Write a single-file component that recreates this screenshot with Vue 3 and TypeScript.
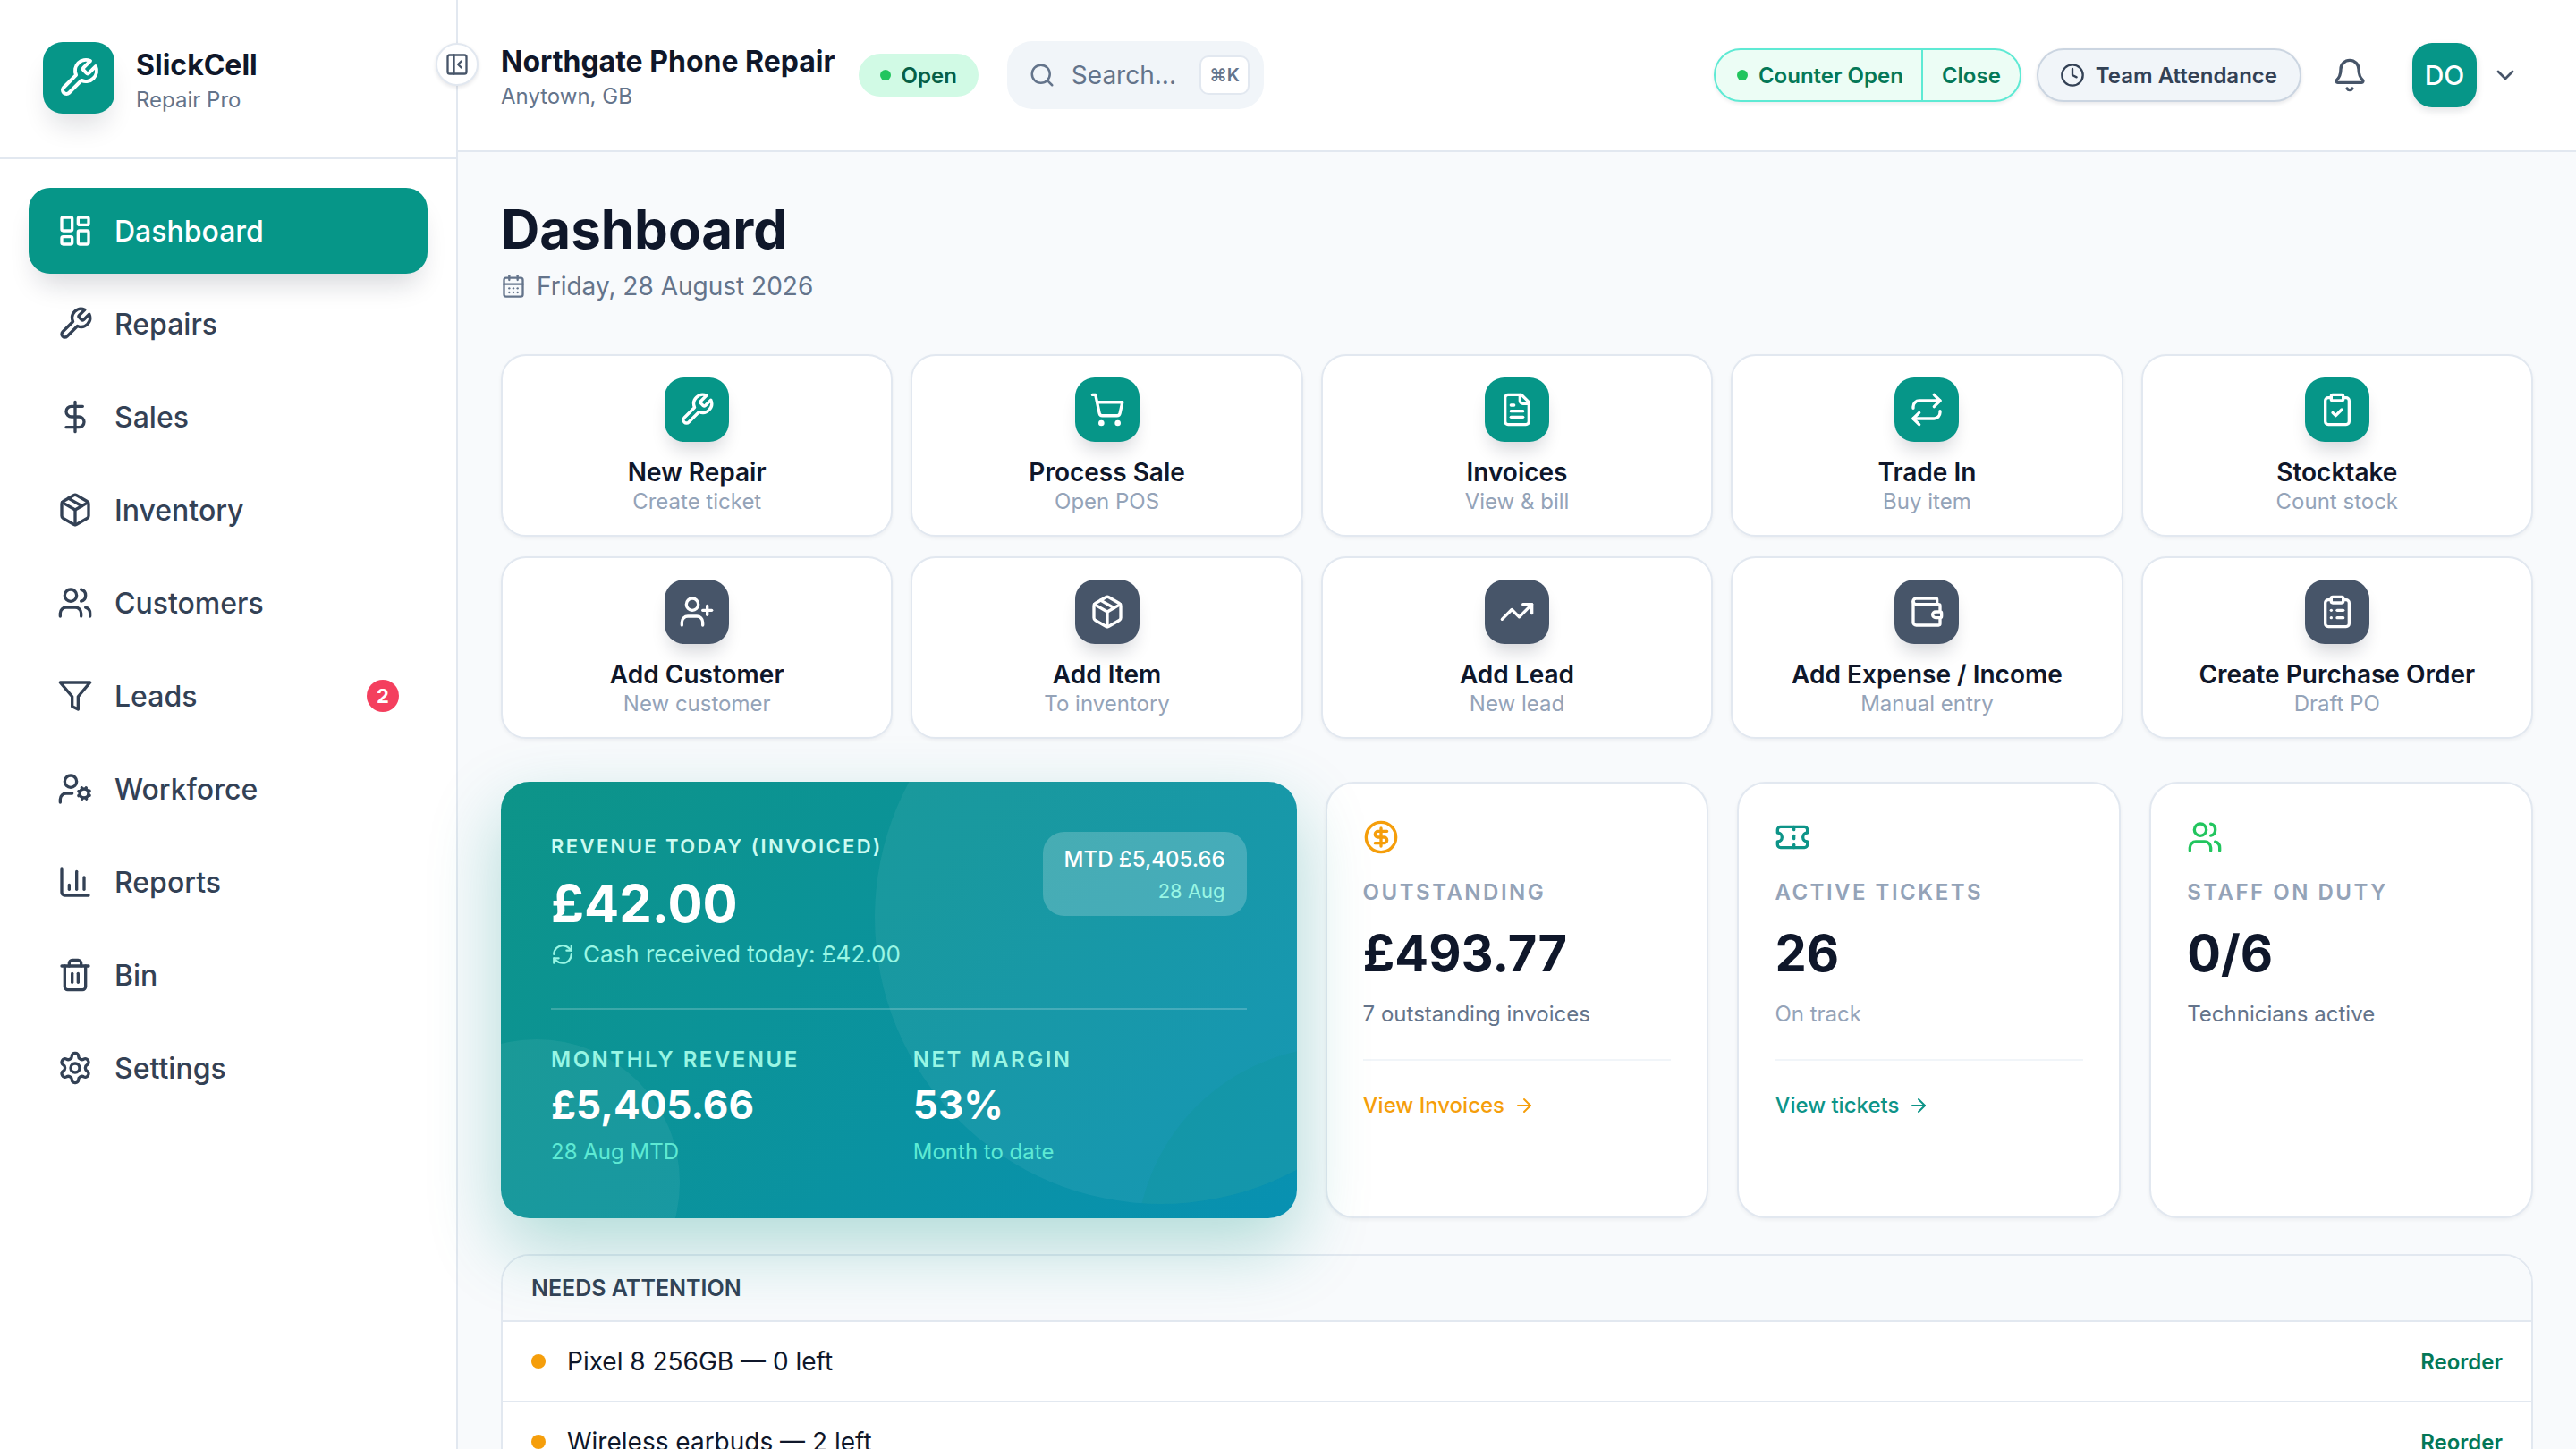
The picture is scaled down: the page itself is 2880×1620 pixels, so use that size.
<script setup lang="ts">
const icons: Record<string, string> = {
  wrench: '<path d="M14.7 6.3a1 1 0 0 0 0 1.4l1.6 1.6a1 1 0 0 0 1.4 0l3.77-3.77a6 6 0 0 1-7.94 7.94l-6.91 6.91a2.12 2.12 0 0 1-3-3l6.91-6.91a6 6 0 0 1 7.94-7.94l-3.76 3.76z"/>',
  dashboard: '<rect x="3" y="3" width="7" height="9" rx="1"/><rect x="14" y="3" width="7" height="5" rx="1"/><rect x="14" y="12" width="7" height="9" rx="1"/><rect x="3" y="16" width="7" height="5" rx="1"/>',
  dollar: '<line x1="12" y1="2" x2="12" y2="22"/><path d="M17 5H9.5a3.5 3.5 0 0 0 0 7h5a3.5 3.5 0 0 1 0 7H6"/>',
  box: '<path d="M11 21.73a2 2 0 0 0 2 0l7-4A2 2 0 0 0 21 16V8a2 2 0 0 0-1-1.73l-7-4a2 2 0 0 0-2 0l-7 4A2 2 0 0 0 3 8v8a2 2 0 0 0 1 1.73z"/><path d="M12 22V12"/><path d="m3.3 7 8.7 5 8.7-5"/><path d="m7.5 4.27 9 5.15"/>',
  users: '<path d="M16 21v-2a4 4 0 0 0-4-4H6a4 4 0 0 0-4 4v2"/><circle cx="9" cy="7" r="4"/><path d="M22 21v-2a4 4 0 0 0-3-3.87"/><path d="M16 3.13a4 4 0 0 1 0 7.75"/>',
  funnel: '<polygon points="22 3 2 3 10 12.46 10 19 14 21 14 12.46 22 3"/>',
  userCog: '<circle cx="18" cy="15" r="3"/><circle cx="9" cy="7" r="4"/><path d="M10 15H6a4 4 0 0 0-4 4v2"/><path d="m21.7 16.4-.9-.3"/><path d="m15.2 13.9-.9-.3"/><path d="m16.6 18.7.3-.9"/><path d="m19.1 12.2.3-.9"/><path d="m19.6 18.7-.4-1"/><path d="m16.8 12.3-.4-1"/><path d="m14.3 16.6 1-.4"/><path d="m20.7 13.8 1-.4"/>',
  chart: '<path d="M3 3v16a2 2 0 0 0 2 2h16"/><path d="M18 17V9"/><path d="M13 17V5"/><path d="M8 17v-3"/>',
  trash: '<path d="M3 6h18"/><path d="M19 6v14c0 1-1 2-2 2H7c-1 0-2-1-2-2V6"/><path d="M8 6V4c0-1 1-2 2-2h4c1 0 2 1 2 2v2"/><line x1="10" y1="11" x2="10" y2="17"/><line x1="14" y1="11" x2="14" y2="17"/>',
  settings: '<path d="M12.22 2h-.44a2 2 0 0 0-2 2v.18a2 2 0 0 1-1 1.73l-.43.25a2 2 0 0 1-2 0l-.15-.08a2 2 0 0 0-2.73.73l-.22.38a2 2 0 0 0 .73 2.73l.15.1a2 2 0 0 1 1 1.72v.51a2 2 0 0 1-1 1.74l-.15.09a2 2 0 0 0-.73 2.73l.22.38a2 2 0 0 0 2.73.73l.15-.08a2 2 0 0 1 2 0l.43.25a2 2 0 0 1 1 1.73V20a2 2 0 0 0 2 2h.44a2 2 0 0 0 2-2v-.18a2 2 0 0 1 1-1.73l.43-.25a2 2 0 0 1 2 0l.15.08a2 2 0 0 0 2.73-.73l.22-.39a2 2 0 0 0-.73-2.73l-.15-.08a2 2 0 0 1-1-1.74v-.5a2 2 0 0 1 1-1.74l.15-.09a2 2 0 0 0 .73-2.73l-.22-.38a2 2 0 0 0-2.73-.73l-.15.08a2 2 0 0 1-2 0l-.43-.25a2 2 0 0 1-1-1.73V4a2 2 0 0 0-2-2z"/><circle cx="12" cy="12" r="3"/>',
  panel: '<rect x="3" y="3" width="18" height="18" rx="2"/><path d="M9 3v18"/><path d="m16 15-3-3 3-3"/>',
  calendar: '<path d="M8 2v4"/><path d="M16 2v4"/><rect x="3" y="4" width="18" height="18" rx="2"/><path d="M3 10h18"/><path d="M8 14h.01"/><path d="M12 14h.01"/><path d="M16 14h.01"/><path d="M8 18h.01"/><path d="M12 18h.01"/><path d="M16 18h.01"/>',
  search: '<path d="m21 21-4.34-4.34"/><circle cx="11" cy="11" r="8"/>',
  clock: '<circle cx="12" cy="12" r="10"/><polyline points="12 6 12 12 16 14"/>',
  bell: '<path d="M10.268 21a2 2 0 0 0 3.464 0"/><path d="M3.262 15.326A1 1 0 0 0 4 17h16a1 1 0 0 0 .74-1.673C19.41 13.956 18 12.499 18 8A6 6 0 0 0 6 8c0 4.499-1.411 5.956-2.738 7.326"/>',
  chevron: '<path d="m6 9 6 6 6-6"/>',
  cart: '<circle cx="8" cy="21" r="1"/><circle cx="19" cy="21" r="1"/><path d="M2.05 2.05h2l2.66 12.42a2 2 0 0 0 2 1.58h9.78a2 2 0 0 0 1.95-1.57l1.65-7.43H5.12"/>',
  file: '<path d="M15 2H6a2 2 0 0 0-2 2v16a2 2 0 0 0 2 2h12a2 2 0 0 0 2-2V7Z"/><path d="M14 2v4a2 2 0 0 0 2 2h4"/><path d="M10 9H8"/><path d="M16 13H8"/><path d="M16 17H8"/>',
  repeat: '<path d="m17 2 4 4-4 4"/><path d="M3 11v-1a4 4 0 0 1 4-4h14"/><path d="m7 22-4-4 4-4"/><path d="M21 13v1a4 4 0 0 1-4 4H3"/>',
  clipCheck: '<rect x="8" y="2" width="8" height="4" rx="1"/><path d="M16 4h2a2 2 0 0 1 2 2v14a2 2 0 0 1-2 2H6a2 2 0 0 1-2-2V6a2 2 0 0 1 2-2h2"/><path d="m9 14 2 2 4-4"/>',
  userPlus: '<path d="M16 21v-2a4 4 0 0 0-4-4H6a4 4 0 0 0-4 4v2"/><circle cx="9" cy="7" r="4"/><line x1="19" y1="8" x2="19" y2="14"/><line x1="22" y1="11" x2="16" y2="11"/>',
  trending: '<path d="M16 7h6v6"/><path d="m22 7-8.5 8.5-5-5L2 17"/>',
  wallet: '<path d="M19 7V4a1 1 0 0 0-1-1H5a2 2 0 0 0 0 4h15a1 1 0 0 1 1 1v4h-3a2 2 0 0 0 0 4h3a1 1 0 0 0 1-1v-2a1 1 0 0 0-1-1"/><path d="M3 5v14a2 2 0 0 0 2 2h15a1 1 0 0 0 1-1v-4"/>',
  clipList: '<rect x="8" y="2" width="8" height="4" rx="1"/><path d="M16 4h2a2 2 0 0 1 2 2v14a2 2 0 0 1-2 2H6a2 2 0 0 1-2-2V6a2 2 0 0 1 2-2h2"/><path d="M12 11h4"/><path d="M12 16h4"/><path d="M8 11h.01"/><path d="M8 16h.01"/>',
  coin: '<circle cx="12" cy="12" r="10"/><path d="M16 8h-6a2 2 0 1 0 0 4h4a2 2 0 1 1 0 4H8"/><path d="M12 18V6"/>',
  ticket: '<path d="M2 9a3 3 0 0 1 0 6v2a2 2 0 0 0 2 2h16a2 2 0 0 0 2-2v-2a3 3 0 0 1 0-6V7a2 2 0 0 0-2-2H4a2 2 0 0 0-2 2Z"/><path d="M13 5v2"/><path d="M13 17v2"/><path d="M13 11v2"/>',
  refresh: '<path d="M3 12a9 9 0 0 1 9-9 9.75 9.75 0 0 1 6.74 2.74L21 8"/><path d="M21 3v5h-5"/><path d="M21 12a9 9 0 0 1-9 9 9.75 9.75 0 0 1-6.74-2.74L3 16"/><path d="M8 16H3v5"/>',
  arrow: '<path d="M5 12h14"/><path d="m12 5 7 7-7 7"/>',
}

const navItems = [
  { label: 'Dashboard', icon: 'dashboard', active: true },
  { label: 'Repairs', icon: 'wrench' },
  { label: 'Sales', icon: 'dollar' },
  { label: 'Inventory', icon: 'box' },
  { label: 'Customers', icon: 'users' },
  { label: 'Leads', icon: 'funnel', badge: 2 },
  { label: 'Workforce', icon: 'userCog' },
  { label: 'Reports', icon: 'chart' },
  { label: 'Bin', icon: 'trash' },
  { label: 'Settings', icon: 'settings' },
]

const actions = [
  { title: 'New Repair', sub: 'Create ticket', icon: 'wrench', tone: 'teal' },
  { title: 'Process Sale', sub: 'Open POS', icon: 'cart', tone: 'teal' },
  { title: 'Invoices', sub: 'View & bill', icon: 'file', tone: 'teal' },
  { title: 'Trade In', sub: 'Buy item', icon: 'repeat', tone: 'teal' },
  { title: 'Stocktake', sub: 'Count stock', icon: 'clipCheck', tone: 'teal' },
  { title: 'Add Customer', sub: 'New customer', icon: 'userPlus', tone: 'slate' },
  { title: 'Add Item', sub: 'To inventory', icon: 'box', tone: 'slate' },
  { title: 'Add Lead', sub: 'New lead', icon: 'trending', tone: 'slate' },
  { title: 'Add Expense / Income', sub: 'Manual entry', icon: 'wallet', tone: 'slate' },
  { title: 'Create Purchase Order', sub: 'Draft PO', icon: 'clipList', tone: 'slate' },
]

const stats = [
  { label: 'Outstanding', value: '£493.77', sub: '7 outstanding invoices', icon: 'coin', tone: 'amber', link: 'View Invoices' },
  { label: 'Active Tickets', value: '26', sub: 'On track', icon: 'ticket', tone: 'teal', link: 'View tickets', muted: true },
  { label: 'Staff on Duty', value: '0/6', sub: 'Technicians active', icon: 'users', tone: 'green' },
]

const alerts = ['Pixel 8 256GB — 0 left', 'Wireless earbuds — 2 left']
</script>

<template>
  <div class="shell">
    <aside class="sidebar">
      <div class="brand">
        <div class="brand-mark">
          <svg class="ico ico-48" viewBox="0 0 24 24" v-html="icons.wrench" />
        </div>
        <div class="brand-text">
          <div class="brand-name">SlickCell</div>
          <div class="brand-plan">Repair Pro</div>
        </div>
      </div>
      <nav class="nav">
        <a
          v-for="item in navItems"
          :key="item.label"
          class="nav-item"
          :class="{ active: item.active }"
        >
          <svg class="ico ico-40" viewBox="0 0 24 24" v-html="icons[item.icon]" />
          <span class="nav-label">{{ item.label }}</span>
          <span v-if="item.badge" class="nav-badge">{{ item.badge }}</span>
        </a>
      </nav>
    </aside>

    <button class="collapse">
      <svg class="ico ico-28" viewBox="0 0 24 24" v-html="icons.panel" />
    </button>

    <div class="main">
      <header class="topbar">
        <div class="shop">
          <div class="shop-name">Northgate Phone Repair</div>
          <div class="shop-place">Anytown, GB</div>
        </div>
        <span class="open-pill"><i class="dot" />Open</span>
        <div class="search">
          <svg class="ico ico-30" viewBox="0 0 24 24" v-html="icons.search" />
          <span class="search-text">Search...</span>
          <kbd class="kbd">⌘K</kbd>
        </div>
        <div class="top-right">
          <div class="counter">
            <span class="counter-state"><i class="dot" />Counter Open</span>
            <span class="counter-close">Close</span>
          </div>
          <div class="attendance">
            <svg class="ico ico-28" viewBox="0 0 24 24" v-html="icons.clock" />
            Team Attendance
          </div>
          <svg class="ico ico-40 bell" viewBox="0 0 24 24" v-html="icons.bell" />
          <div class="avatar">DO</div>
          <svg class="ico ico-32 caret" viewBox="0 0 24 24" v-html="icons.chevron" />
        </div>
      </header>

      <main class="content">
        <h1 class="page-title">Dashboard</h1>
        <div class="page-date">
          <svg class="ico ico-28" viewBox="0 0 24 24" v-html="icons.calendar" />
          Friday, 28 August 2026
        </div>

        <section class="actions">
          <div v-for="action in actions" :key="action.title" class="action">
            <div class="action-icon" :class="action.tone">
              <svg class="ico ico-40" viewBox="0 0 24 24" v-html="icons[action.icon]" />
            </div>
            <div class="action-title">{{ action.title }}</div>
            <div class="action-sub">{{ action.sub }}</div>
          </div>
        </section>

        <section class="stats">
          <div class="hero">
            <i class="blob blob-a"><i class="blob-c" /></i>
            <i class="blob blob-b" />
            <div class="hero-top">
              <div>
                <div class="hero-label">REVENUE TODAY (INVOICED)</div>
                <div class="hero-value">£42.00</div>
                <div class="hero-cash">
                  <svg class="ico ico-26" viewBox="0 0 24 24" v-html="icons.refresh" />
                  Cash received today: £42.00
                </div>
              </div>
              <div class="mtd">
                <div class="mtd-value">MTD £5,405.66</div>
                <div class="mtd-date">28 Aug</div>
              </div>
            </div>
            <div class="hero-bottom">
              <div>
                <div class="hero-sublabel">MONTHLY REVENUE</div>
                <div class="hero-subvalue">£5,405.66</div>
                <div class="hero-note">28 Aug MTD</div>
              </div>
              <div>
                <div class="hero-sublabel">NET MARGIN</div>
                <div class="hero-subvalue">53%</div>
                <div class="hero-note">Month to date</div>
              </div>
            </div>
          </div>

          <div v-for="stat in stats" :key="stat.label" class="stat">
            <svg class="ico ico-40" :class="stat.tone" viewBox="0 0 24 24" v-html="icons[stat.icon]" />
            <div class="stat-label">{{ stat.label }}</div>
            <div class="stat-value">{{ stat.value }}</div>
            <div class="stat-sub" :class="{ muted: stat.muted }">{{ stat.sub }}</div>
            <div v-if="stat.link" class="stat-foot" :class="stat.tone">
              {{ stat.link }}
              <svg class="ico ico-24" viewBox="0 0 24 24" v-html="icons.arrow" />
            </div>
          </div>
        </section>

        <section class="panel">
          <div class="panel-head">NEEDS ATTENTION</div>
          <div v-for="alert in alerts" :key="alert" class="panel-row">
            <i class="amber-dot" />
            <span class="panel-text">{{ alert }}</span>
            <a class="reorder">Reorder</a>
          </div>
        </section>
      </main>
    </div>
  </div>
</template>

<style>
html,
body {
  margin: 0;
  background: #f8fafc;
}
</style>

<style scoped>
.shell {
  position: relative;
  display: flex;
  width: 2880px;
  height: 1620px;
  overflow: hidden;
  background: #f8fafc;
  color: #0f172a;
  font-family: Inter, "Liberation Sans", sans-serif;
}

.ico {
  flex: none;
  fill: none;
  stroke: currentColor;
  stroke-width: 2;
  stroke-linecap: round;
  stroke-linejoin: round;
}
.ico-24 { width: 24px; height: 24px; }
.ico-26 { width: 26px; height: 26px; }
.ico-28 { width: 28px; height: 28px; }
.ico-30 { width: 30px; height: 30px; }
.ico-32 { width: 32px; height: 32px; }
.ico-40 { width: 40px; height: 40px; }
.ico-48 { width: 48px; height: 48px; }

.sidebar {
  flex: none;
  width: 512px;
  box-sizing: border-box;
  background: #fff;
  border-right: 2px solid #e2e8f0;
}

.brand {
  display: flex;
  align-items: center;
  gap: 24px;
  height: 178px;
  box-sizing: border-box;
  padding: 0 48px 2px;
  border-bottom: 2px solid #e2e8f0;
}

.brand-mark {
  display: flex;
  align-items: center;
  justify-content: center;
  width: 80px;
  height: 80px;
  border-radius: 22px;
  background: #069688;
  color: #fff;
  box-shadow: 0 20px 30px -8px rgba(15, 23, 42, 0.14);
}

.brand-text {
  margin-top: 4px;
}

.brand-name {
  font-size: 32px;
  line-height: 46px;
  font-weight: 700;
}

.brand-plan {
  font-size: 24px;
  line-height: 32px;
  color: #64748b;
}

.nav {
  display: flex;
  flex-direction: column;
  gap: 8px;
  padding: 32px;
}

.nav-item {
  display: flex;
  align-items: center;
  gap: 24px;
  height: 96px;
  padding: 0 32px;
  border-radius: 24px;
  color: #334155;
}

.nav-item.active {
  background: #069688;
  color: #fff;
  box-shadow: 0 20px 30px -10px rgba(15, 23, 42, 0.18);
}

.nav-label {
  flex: 1;
  font-size: 32px;
  font-weight: 500;
}

.nav-badge {
  display: flex;
  align-items: center;
  justify-content: center;
  width: 36px;
  height: 36px;
  border-radius: 50%;
  background: #f43f5e;
  color: #fff;
  font-size: 22px;
  font-weight: 700;
}

.collapse {
  position: absolute;
  left: 487px;
  top: 48px;
  z-index: 3;
  display: flex;
  align-items: center;
  justify-content: center;
  width: 48px;
  height: 48px;
  padding: 0;
  border: 2px solid #e2e8f0;
  border-radius: 50%;
  background: #fff;
  color: #475569;
  box-shadow: 0 2px 4px rgba(15, 23, 42, 0.1);
}

.main {
  flex: 1;
  min-width: 0;
  display: flex;
  flex-direction: column;
}

.topbar {
  flex: none;
  display: flex;
  align-items: center;
  height: 170px;
  box-sizing: border-box;
  padding: 0 48px;
  background: #fff;
  border-bottom: 2px solid #e2e8f0;
}

.shop {
  margin-top: 2px;
}

.shop-name {
  font-size: 32px;
  line-height: 46px;
  font-weight: 700;
}

.shop-place {
  font-size: 24px;
  line-height: 32px;
  color: #64748b;
}

.open-pill {
  display: flex;
  align-items: center;
  gap: 12px;
  height: 48px;
  margin-left: 26px;
  padding: 0 24px;
  border-radius: 24px;
  background: #d1fae5;
  color: #065f46;
  font-size: 24px;
  font-weight: 600;
}

.dot {
  width: 12px;
  height: 12px;
  border-radius: 50%;
  background: #22c55e;
}

.search {
  display: flex;
  align-items: center;
  height: 76px;
  margin-left: 32px;
  padding: 0 16px 0 24px;
  border-radius: 28px;
  background: #f1f5f9;
  color: #64748b;
}

.search-text {
  margin: 0 26px 0 18px;
  font-size: 28px;
}

.kbd {
  display: flex;
  align-items: center;
  justify-content: center;
  width: 56px;
  height: 44px;
  box-sizing: border-box;
  border: 2px solid #e2e8f0;
  border-radius: 10px;
  background: #fff;
  font-family: inherit;
  font-size: 20px;
  font-weight: 600;
}

.top-right {
  display: flex;
  align-items: center;
  margin-left: auto;
  margin-right: 15px;
}

.counter {
  display: flex;
  align-items: center;
  height: 60px;
  box-sizing: border-box;
  border: 2px solid #5eead4;
  border-radius: 30px;
  background: #ecfdf5;
  color: #047857;
  font-size: 24px;
  font-weight: 600;
  box-shadow: 0 2px 4px rgba(15, 23, 42, 0.08);
}

.counter-state {
  display: flex;
  align-items: center;
  gap: 12px;
  height: 100%;
  padding: 0 20px 0 24px;
  border-right: 2px solid #5eead4;
}

.counter-close {
  padding: 0 21px;
}

.attendance {
  display: flex;
  align-items: center;
  gap: 12px;
  height: 60px;
  box-sizing: border-box;
  margin-left: 17px;
  padding: 0 25px 0 24px;
  border: 2px solid #cbd5e1;
  border-radius: 30px;
  background: #f1f5f9;
  color: #334155;
  font-size: 24px;
  font-weight: 600;
  box-shadow: 0 2px 4px rgba(15, 23, 42, 0.1);
}

.bell {
  margin-left: 34px;
  color: #475569;
}

.avatar {
  display: flex;
  align-items: center;
  justify-content: center;
  width: 72px;
  height: 72px;
  margin-left: 50px;
  border-radius: 22px;
  background: #069688;
  color: #fff;
  font-size: 30px;
  font-weight: 500;
  box-shadow: 0 4px 8px rgba(15, 23, 42, 0.12);
}

.caret {
  margin-left: 16px;
  color: #475569;
}

.content {
  padding: 52px 48px 48px;
}

.page-title {
  margin: 0;
  font-size: 60px;
  line-height: 68px;
  font-weight: 700;
}

.page-date {
  display: flex;
  align-items: center;
  gap: 12px;
  margin-top: 10px;
  font-size: 28px;
  line-height: 40px;
  color: #64748b;
}

.actions {
  display: grid;
  grid-template-columns: repeat(5, 1fr);
  gap: 22px 20px;
  margin-top: 56px;
}

.action {
  display: flex;
  flex-direction: column;
  align-items: center;
  height: 204px;
  box-sizing: border-box;
  padding-top: 24px;
  border: 2px solid #e2e8f0;
  border-radius: 28px;
  background: #fff;
  box-shadow: 0 2px 4px rgba(15, 23, 42, 0.05);
}

.action-icon {
  display: flex;
  align-items: center;
  justify-content: center;
  width: 72px;
  height: 72px;
  border-radius: 22px;
  color: #fff;
  box-shadow: 0 14px 20px -6px rgba(15, 23, 42, 0.18);
}

.action-icon.teal { background: #069688; }
.action-icon.slate { background: #475569; }

.action-title {
  margin-top: 15px;
  font-size: 28px;
  line-height: 38px;
  font-weight: 600;
}

.action-sub {
  font-size: 24px;
  line-height: 28px;
  color: #94a3b8;
}

.stats {
  display: grid;
  grid-template-columns: repeat(5, 1fr);
  gap: 32px;
  margin-top: 48px;
}

.hero {
  position: relative;
  z-index: 1;
  grid-column: span 2;
  height: 488px;
  box-sizing: border-box;
  padding: 56px;
  overflow: hidden;
  border-radius: 32px;
  background: linear-gradient(135deg, #0d9488, #0891b2);
  color: #fff;
  box-shadow: 0 32px 80px rgba(13, 148, 136, 0.3);
}

.blob {
  position: absolute;
  overflow: hidden;
  border-radius: 50%;
  background: rgba(255, 255, 255, 0.06);
}

.blob-a {
  top: -168px;
  right: -168px;
  width: 640px;
  height: 640px;
}

.blob-b {
  left: -120px;
  bottom: -120px;
  width: 320px;
  height: 320px;
}

/* faint patch in the lower right of the big circle */
.blob-c {
  position: absolute;
  left: 292px;
  top: 464px;
  width: 460px;
  height: 460px;
  border-radius: 50%;
  background: rgba(13, 148, 136, 0.18);
}

.hero-top {
  position: relative;
  display: flex;
  justify-content: space-between;
  align-items: flex-start;
  height: 197px;
  border-bottom: 2px solid rgba(255, 255, 255, 0.2);
}

.hero-label {
  font-size: 22px;
  line-height: 32px;
  font-weight: 600;
  letter-spacing: 2.4px;
  color: #ccfbf1;
}

.hero-value {
  margin-top: 12px;
  font-size: 58px;
  line-height: 72px;
  font-weight: 700;
}

.hero-cash {
  display: flex;
  align-items: center;
  gap: 10px;
  margin-top: 3px;
  font-size: 26px;
  line-height: 36px;
  color: #99f6e4;
}

.mtd {
  box-sizing: border-box;
  height: 94px;
  padding: 12px 24px;
  border-radius: 24px;
  background: rgba(255, 255, 255, 0.2);
  text-align: right;
}

.mtd-value {
  font-size: 24px;
  line-height: 38px;
  font-weight: 500;
}

.mtd-date {
  font-size: 22px;
  line-height: 32px;
  color: #99f6e4;
}

.hero-bottom {
  position: relative;
  display: grid;
  grid-template-columns: 1fr 1fr;
  gap: 32px;
  margin-top: 40px;
}

.hero-sublabel {
  font-size: 24px;
  line-height: 32px;
  font-weight: 600;
  letter-spacing: 2.5px;
  color: #99f6e4;
}

.hero-subvalue {
  margin-top: 4px;
  font-size: 44px;
  line-height: 60px;
  font-weight: 700;
}

.hero-note {
  margin-top: 6px;
  font-size: 24px;
  line-height: 34px;
  color: #5eead4;
}

.stat {
  height: 488px;
  box-sizing: border-box;
  padding: 40px;
  border: 2px solid #e2e8f0;
  border-radius: 32px;
  background: #fff;
  box-shadow: 0 2px 4px rgba(15, 23, 42, 0.05);
}

.stat > .ico {
  display: block;
}

.ico.amber { color: #f59e0b; }
.ico.teal { color: #0d9488; }
.ico.green { color: #22c55e; }

.stat-label {
  margin-top: 24px;
  font-size: 24px;
  line-height: 36px;
  font-weight: 600;
  letter-spacing: 2.5px;
  text-transform: uppercase;
  color: #94a3b8;
}

.stat-value {
  margin-top: 14px;
  font-size: 56px;
  line-height: 72px;
  font-weight: 700;
}

.stat-sub {
  margin-top: 14px;
  font-size: 24px;
  line-height: 36px;
  color: #64748b;
}

.stat-sub.muted {
  color: #94a3b8;
}

.stat-foot {
  display: flex;
  align-items: center;
  gap: 10px;
  margin-top: 32px;
  padding-top: 32px;
  border-top: 2px solid #f1f5f9;
  font-size: 24px;
  line-height: 36px;
  font-weight: 500;
}

.stat-foot.amber { color: #f59e0b; }
.stat-foot.teal { color: #0d9488; }

.panel {
  margin-top: 40px;
  border: 2px solid #e2e8f0;
  border-radius: 32px;
  background: #fff;
  overflow: hidden;
}

.panel-head {
  display: flex;
  align-items: center;
  height: 72px;
  padding: 0 32px;
  background: #f8fafc;
  border-bottom: 2px solid #e2e8f0;
  font-size: 25px;
  font-weight: 600;
  color: #334155;
}

.panel-row {
  display: flex;
  align-items: center;
  gap: 24px;
  height: 88px;
  padding: 0 32px;
  border-bottom: 2px solid #e2e8f0;
}

.amber-dot {
  width: 16px;
  height: 16px;
  border-radius: 50%;
  background: #f59e0b;
}

.panel-text {
  flex: 1;
  font-size: 28px;
}

.reorder {
  font-size: 24px;
  font-weight: 600;
  color: #047857;
}
</style>
